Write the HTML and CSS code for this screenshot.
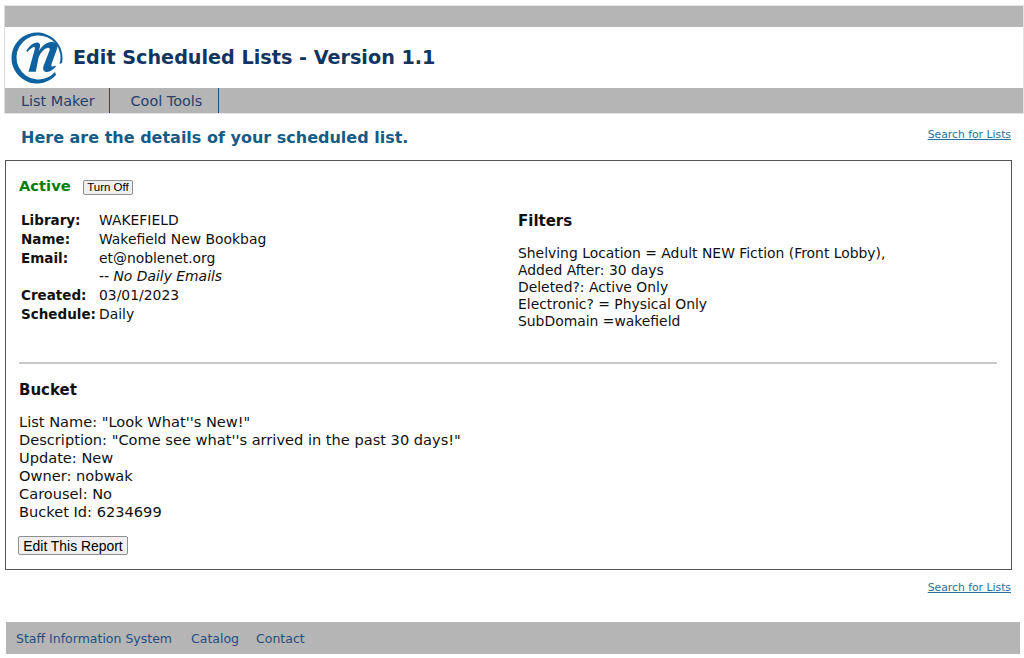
FILE: index.html
```html
<!DOCTYPE html>
<html lang="en">
<head>
<meta charset="utf-8">
<title>Edit Scheduled Lists</title>
<link rel="stylesheet" href="styles.css">
</head>
<body>
<header class="site-header">
  <div class="top-bar"></div>
  <div class="brand">
    <svg class="logo" viewBox="0 0 52 52" width="52" height="52" aria-hidden="true">
      <path d="M45 43A25.500 25.500 0 1 1 51 31L48.500 32A22 22 0 1 0 44 40Z" fill="#0f62a0"/>
      <path d="M15.300 19C18 14.500 22 10.500 26 10.500C29 10.500 29.500 13 28.800 15.500L27.800 19C31.500 13.500 35.500 10 40 10C45 10 47.300 12.500 46 17L40.500 32C40 34 40.800 35 42 34.500L44.200 33.500L44.800 34.800C42 37.500 39.500 40 36 40C32.500 40 31.500 37.500 32.500 34L38.500 18.500C39.300 16.500 38 15.500 36.200 16C32.500 17 29 21.500 27.500 26L24.800 39.800L17.500 39.800L23.800 17C24.300 15 23.300 14.500 22 15.300C20 16.500 18 18 16.500 20Z" fill="#0f62a0"/>
    </svg>
    <h1 class="app-title">Edit Scheduled Lists - Version 1.1</h1>
  </div>
  <nav class="main-nav">
    <a class="nav-item" href="#">List Maker</a>
    <a class="nav-item" href="#">Cool Tools</a>
  </nav>
</header>

<div class="intro">
  <h2 class="intro-title">Here are the details of your scheduled list.</h2>
  <a class="search-link" href="#">Search for Lists</a>
</div>

<main class="details">
  <div class="status">
    <span class="status-label">Active</span>
    <button class="btn btn-small" type="button">Turn Off</button>
  </div>
  <div class="columns">
    <dl class="info">
      <dt>Library:</dt><dd>WAKEFIELD</dd>
      <dt>Name:</dt><dd>Wakefield New Bookbag</dd>
      <dt>Email:</dt><dd>et@noblenet.org<br><em>-- No Daily Emails</em></dd>
      <dt>Created:</dt><dd>03/01/2023</dd>
      <dt>Schedule:</dt><dd>Daily</dd>
    </dl>
    <section class="filters">
      <h3 class="section-title">Filters</h3>
      <p class="lines">Shelving Location = Adult NEW Fiction (Front Lobby),<br>Added After: 30 days<br>Deleted?: Active Only<br>Electronic? = Physical Only<br>SubDomain =wakefield</p>
    </section>
  </div>
  <hr class="divider">
  <section class="bucket">
    <h3 class="section-title">Bucket</h3>
    <p class="lines">List Name: "Look What''s New!"<br>Description: "Come see what''s arrived in the past 30 days!"<br>Update: New<br>Owner: nobwak<br>Carousel: No<br>Bucket Id: 6234699</p>
  </section>
  <button class="btn btn-edit" type="button">Edit This Report</button>
</main>

<div class="after">
  <a class="search-link" href="#">Search for Lists</a>
</div>

<footer class="site-footer">
  <a href="#">Staff Information System</a>
  <a href="#">Catalog</a>
  <a href="#">Contact</a>
</footer>
</body>
</html>
```

FILE: styles.css
```css
* { box-sizing: border-box; }

html, body { height: 100%; }

body {
  margin: 0;
  padding: 5px 0 0 4px;
  background: #fff;
  color: #111;
  font-family: Verdana, "DejaVu Sans", sans-serif;
  font-size: 13.900px;
  overflow: hidden;
}

.site-header {
  border: 1px solid #e4e4e4;
  border-left-color: #ddd;
  width: 1020px;
}

.top-bar { height: 21px; background: #b5b5b5; }

.brand {
  display: flex;
  align-items: center;
  gap: 10px;
  height: 61px;
  padding-left: 6px;
  background: #fff;
}

.logo { flex: none; }

.app-title {
  margin: 0;
  color: #12355f;
  font-size: 19.200px;
  font-weight: bold;
}

.main-nav {
  display: flex;
  height: 25px;
  background: #b5b5b5;
}

.nav-item {
  display: flex;
  align-items: center;
  padding: 0 16px 0 21px;
  border-right: 1px solid #1f4e7a;
  color: #1f3f6d;
  font-size: 14.400px;
  text-decoration: none;
}

.nav-item:first-child { padding: 0 14px 0 16px; }

.intro {
  display: flex;
  justify-content: space-between;
  width: 1007px;
  height: 46px;
  padding: 14px 0 0 17px;
}

.intro-title {
  margin: 0;
  color: #135c86;
  font-size: 16px;
  font-weight: bold;
}

.search-link {
  color: #2a6f9e;
  font-size: 10.800px;
  line-height: 13px;
  text-decoration: underline;
}

.details {
  width: 1007px;
  height: 410px;
  margin-left: 1px;
  padding: 14px 14px 0 13px;
  border: 1px solid #555;
}

.status { display: flex; align-items: center; gap: 12px; height: 20px; }

.status-label { color: #0a7d0a; font-size: 14.700px; font-weight: bold; }

.btn {
  height: 19px;
  padding: 0 5px;
  border: 1px solid #8f8f8f;
  border-radius: 2px;
  background: #efefef;
  color: #000;
  font-family: "Liberation Sans", Arial, sans-serif;
  font-size: 13.900px;
}

.btn-small { height: 15px; margin-top: 4px; padding: 0 3.500px; font-size: 11.500px; line-height: 12px; }

.btn-edit { width: 110px; margin-left: -1px; padding: 0; }

.columns { display: flex; margin-top: 17px; height: 150px; }

.info {
  display: grid;
  grid-template-columns: 78px 1fr;
  grid-auto-rows: min-content;
  row-gap: 1px;
  width: 499px;
  margin: -1px 0 0;
  padding: 0 0 0 2px;
  line-height: 18px;
}

.info dt { font-size: 13.500px; font-weight: bold; }
.info dd { margin: 0; }

.section-title { margin: 0; font-size: 15px; font-weight: bold; line-height: 18px; }

.filters .lines { margin: 15px 0 0; }

.lines { line-height: 17px; }

.divider {
  height: 2px;
  margin: 0 0 17px;
  border: 0;
  background: #c9c9c9;
}

.bucket .lines { margin: 14px 0 15px; font-size: 14.600px; line-height: 18px; }

.after {
  display: flex;
  justify-content: flex-end;
  width: 1007px;
  height: 52px;
  padding-top: 11px;
}

.site-footer {
  display: flex;
  align-items: center;
  gap: 19px;
  width: 1014px;
  height: 32px;
  margin-left: 2px;
  padding-left: 10px;
  background: #b5b5b5;
}

.site-footer a {
  color: #1f4f82;
  font-size: 12.500px;
  text-decoration: none;
}

.site-footer a:last-child { margin-left: -2px; }
```
